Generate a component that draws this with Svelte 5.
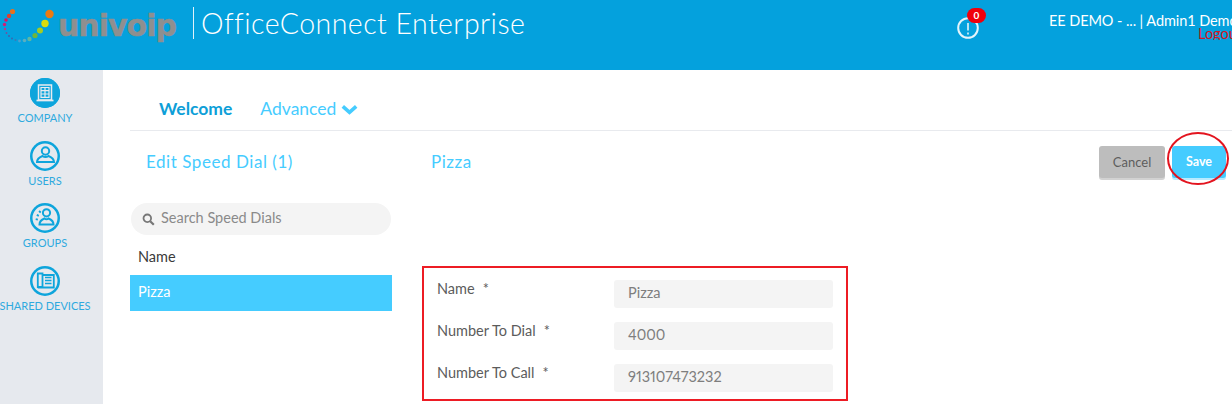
<script>
  const navItems = [
    { label: 'COMPANY', icon: 'company' },
    { label: 'USERS', icon: 'user' },
    { label: 'GROUPS', icon: 'group' },
    { label: 'SHARED DEVICES', icon: 'device' }
  ];
  const fields = [
    { label: 'Name', value: 'Pizza' },
    { label: 'Number To Dial', value: '4000' },
    { label: 'Number To Call', value: '913107473232' }
  ];
  const dots = [
    [49.5,14,4.2,'#ee7a11'],[45,23.5,3.7,'#dbdc0c'],[40,30.5,3,'#a5cc22'],[35,35.5,2.6,'#6fb63a'],[29.5,39,2.2,'#5fb7a0'],
    [24.5,40.5,1.8,'#5aaec0'],[19.5,41,1.4,'#4f9fcd'],[15.5,40,1,'#3d76b8'],[12,38.5,.9,'#3e63ac'],[9,36,.9,'#4b58a5'],[6.5,33,.9,'#7b4c9c'],
    [5,29,1.2,'#b0418f'],[4.5,24.5,1.7,'#d21c78'],[6,20,1.8,'#e0115f'],[9,16,2.2,'#e23f2b'],[12.5,11.5,2.6,'#e8701c']
  ];
</script>

<div class="page">
  <header class="top">
    <div class="brand">
      <svg class="dots" width="56" height="46" viewBox="0 0 56 46" aria-hidden="true">
        {#each dots as d}<circle cx={d[0]} cy={d[1]} r={d[2]} fill={d[3]} />{/each}
      </svg>
      <span class="wordmark">univoip</span>
      <span class="product">OfficeConnect Enterprise</span>
    </div>
    <div class="alert">
      <svg width="22" height="22" viewBox="0 0 22 22" aria-hidden="true">
        <circle cx="11" cy="11" r="9.8" fill="none" stroke="#e4f4fb" stroke-width="2"/>
        <path d="M11 6v7.5M11 15.5v2" stroke="#e4f4fb" stroke-width="1.6" fill="none"/>
      </svg>
      <span class="badge">0</span>
    </div>
    <div class="account">
      <div class="who">EE DEMO - ... | Admin1 Demo</div>
      <div class="logout">Logout</div>
    </div>
  </header>

  <div class="body">
    <nav class="side">
      {#each navItems as item, i}
        <div class="nav-item">
          <span class="nav-ico" class:solid={i === 0}>
            <svg width="30" height="30" viewBox="0 0 30 30" aria-hidden="true">
              {#if item.icon === 'company'}
                <path d="M8.500 7h13v15h-13z" fill="none" stroke="#e8ebf0" stroke-width="1.500"/>
                <path d="M11 9.500h8v9.800h-8zM11 12.700h8M11 16h8M15 9.500v9.800" fill="none" stroke="#e8ebf0" stroke-width="1.200"/>
                <path d="M6.500 22.500h17" stroke="#e8ebf0" stroke-width="1.700"/>
              {:else if item.icon === 'user'}
                <circle cx="15.500" cy="10" r="3.700" fill="none" stroke="#0ea5dc" stroke-width="2"/>
                <path d="M7 21c0-3.200 2.700-4.800 5.500-6 1.800 1.300 4.200 1.300 6 0 2.800 1.200 5.500 2.800 5.500 6z" fill="none" stroke="#0ea5dc" stroke-width="2"/>
              {:else if item.icon === 'group'}
                <circle cx="16.500" cy="9.800" r="3.600" fill="none" stroke="#0ea5dc" stroke-width="2"/>
                <path d="M9.500 21.500c0-3.400 2.500-5 5-6 1.200 1 2.800 1 4 0 2.500 1 5 2.600 5 6z" fill="none" stroke="#0ea5dc" stroke-width="2"/>
                <path d="M10.500 8l-1.200 1.500M8.200 11.500l-.8 1.800M7 15.500l-.4 1.800" stroke="#0ea5dc" stroke-width="2.200" fill="none"/>
              {:else}
                <path d="M7.800 7.500h4.700v13.500h-4.700z" fill="none" stroke="#0ea5dc" stroke-width="1.800"/>
                <path d="M12.500 9h11.300v12.500h-16" fill="none" stroke="#0ea5dc" stroke-width="1.800"/>
                <path d="M15 11.500h6.500M15 14.500h6.500M15 17.500h6.500" stroke="#0ea5dc" stroke-width="1.700"/>
              {/if}
            </svg>
          </span>
          <span class="nav-label">{item.label}</span>
        </div>
      {/each}
    </nav>

    <main class="main">
      <div class="tabs">
        <span class="tab active">Welcome</span>
        <span class="tab">Advanced
          <svg width="17" height="11" viewBox="0 0 17 11" aria-hidden="true"><path d="M1.800 2.300l6.700 6 6.700-6" fill="none" stroke="#45ccff" stroke-width="3.600"/></svg>
        </span>
      </div>

      <div class="titlebar">
        <span class="title list-title">Edit Speed Dial (1)</span>
        <span class="title">Pizza</span>
        <div class="actions">
          <button class="btn cancel">Cancel</button>
          <button class="btn save">Save</button>
          <span class="ring"></span>
        </div>
      </div>

      <div class="content">
        <section class="list">
          <div class="search">
            <svg width="13" height="13" viewBox="0 0 13 13" aria-hidden="true"><circle cx="5.300" cy="5.300" r="3.800" fill="none" stroke="#777" stroke-width="1.800"/><path d="M8.200 8.200l3.600 3.600" stroke="#777" stroke-width="2.200"/></svg>
            <span>Search Speed Dials</span>
          </div>
          <div class="col-head">Name</div>
          <div class="row">Pizza</div>
        </section>
        <section class="form">
          {#each fields as f}
            <div class="field">
              <span class="label">{f.label}<span class="req">*</span></span>
              <span class="input">{f.value}</span>
            </div>
          {/each}
        </section>
      </div>
    </main>
  </div>
</div>

<style>
  :global(body) { margin: 0; overflow: hidden; background: #fff; }
  .page { width: 1232px; height: 404px; overflow: hidden; font-family: Lato, "Open Sans", sans-serif; }
  .top { height: 70px; background: #04a1dd; display: flex; align-items: flex-start; color: #fff; box-sizing: border-box; }
  .brand { display: flex; align-items: flex-start; width: 952px; flex: none; }
  .dots { flex: none; }
  .wordmark { font-family: "DejaVu Sans", sans-serif; font-weight: 700; font-size: 30px; line-height: 40px; letter-spacing: -1px; -webkit-text-stroke: .5px #8f8f8f; color: #8f8f8f; width: 135px; margin: 6px 0 0 2px; flex: none; }
  .product { font-size: 28.500px; line-height: 32px; border-left: 1px solid #dff2fa; padding-left: 7px; margin-top: 7px; height: 32px; letter-spacing: .45px; font-weight: 300; white-space: nowrap; }
  .alert { position: relative; width: 97px; flex: none; padding: 17px 0 0 5px; box-sizing: border-box; }
  .alert svg { display: block; }
  .badge { position: absolute; left: 15px; top: 8px; width: 19px; height: 15px; border-radius: 8px; background: #f0000c; color: #fff; font-size: 10px; font-weight: 700; line-height: 14px; text-align: center; }
  .account { flex: none; width: 183px; white-space: nowrap; font-size: 14.500px; overflow: hidden; padding-top: 13.500px; }
  .who { line-height: 13px; letter-spacing: -.08px; }
  .logout { color: #d5141f; line-height: 13px; margin-left: 149px; }

  .body { display: flex; height: 334px; }
  .side { width: 103px; flex: none; background: #e6e9ee; display: flex; flex-direction: column; align-items: flex-start; padding-top: 8px; box-sizing: border-box; }
  .nav-item { display: flex; flex-direction: column; align-items: center; height: 62.500px; width: 90px; }
  .nav-ico { width: 30px; height: 30px; border-radius: 50%; box-sizing: border-box; box-shadow: inset 0 0 0 2.500px #0ea5dc; display: block; }
  .nav-ico.solid { background: #0ea5dc; }
  .nav-ico svg { display: block; }
  .nav-label { font-size: 11px; line-height: 12px; color: #2fa9de; margin-top: 4px; white-space: nowrap; }

  .main { flex: 1; min-width: 0; padding-left: 27px; }
  .tabs { height: 61px; box-sizing: border-box; border-bottom: 1px solid #e8eaee; display: flex; align-items: flex-start; padding: 28px 0 0 29px; gap: 28px; }
  .tab { font-size: 17.500px; line-height: 21px; color: #45ccff; white-space: nowrap; }
  .tab.active { color: #0e9fd8; font-weight: 700; }

  .titlebar { display: flex; align-items: center; height: 61px; padding: 0 0 1px 16px; }
  .title { color: #45ccff; font-size: 17px; letter-spacing: .55px; }
  .list-title { width: 285px; flex: none; }
  .actions { position: relative; margin-left: auto; display: flex; gap: 7px; padding-right: 6px; }
  .btn { border: 0; height: 32px; border-radius: 3px; font: 400 13px/32px Lato, sans-serif; padding: 0; }
  .cancel { width: 66px; background: #bdbdbd; color: #5d5d5d; box-shadow: 0 2px 0 #d2d2d2; }
  .save { width: 54px; background: #45ccff; color: #fff; font-weight: 700; font-size: 12.500px; box-shadow: 0 2px 0 #b8ebff; }
  .ring { position: absolute; right: 3px; top: -14px; width: 58px; height: 49px; border: 2px solid #e3141f; border-radius: 50%; }

  .content { display: flex; align-items: flex-start; }
  .list { width: 262px; flex: none; margin-right: 30px; }
  .search { margin: 10px 1px 0 1px; height: 32px; border-radius: 16px; background: #f4f4f4; display: flex; align-items: center; padding-left: 11px; gap: 6px; color: #8a8a8a; font-size: 14.500px; line-height: 28px; }
  .search span { margin-top: -2px; }
  .col-head { height: 40px; line-height: 44px; padding-left: 8px; color: #3a3a3a; font-size: 14.500px; box-sizing: border-box; }
  .row { height: 36px; line-height: 34px; background: #45ccff; color: #fff; padding-left: 8px; font-size: 14.500px; }

  .form { width: 426px; height: 135px; box-sizing: border-box; border: 2px solid #ed1c24; margin-top: 73px; padding: 11px 0 0 13px; background: #fff; }
  .field { display: flex; align-items: flex-start; height: 42px; }
  .label { width: 177px; flex: none; color: #5c5c5c; font-size: 14.500px; line-height: 19px; }
  .req { margin-left: 8px; }
  .input { width: 219px; height: 28px; margin-top: 1px; border-radius: 3px; background: #f4f4f4; color: #7e7e7e; font-size: 14.500px; line-height: 25px; padding-left: 14px; box-sizing: border-box; font-variant-numeric: proportional-nums; }
</style>
